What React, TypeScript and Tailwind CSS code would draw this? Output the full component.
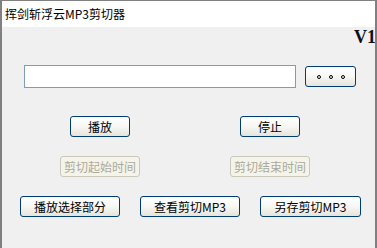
import React from 'react';

const font = { fontFamily: '"Noto Sans CJK SC", "Noto Sans", sans-serif' };

const Btn: React.FC<{ w: string; children: React.ReactNode; disabled?: boolean }> = ({ w, children, disabled }) => {
  if (disabled) {
    return (
      <div
        className={`${w} h-[21px] flex items-center justify-center rounded-[3px] border border-[#cac8bb] bg-[#f5f4ea] text-[12px] leading-none text-[#aca899]`}
      >
        {children}
      </div>
    );
  }
  return (
    <div
      className={`${w} h-[21px] flex items-center justify-center rounded-[3px] border border-[#003c74] bg-gradient-to-b from-white via-[#f7f7f4] to-[#e6e4da] text-[12px] leading-none text-black`}
    >
      {children}
    </div>
  );
};

const App: React.FC = () => {
  return (
    <div
      className="w-[377px] h-[248px] overflow-hidden bg-[#f0f0f0] border-t border-l-2 border-r-2 border-[#808080]"
      style={font}
    >
      {/* titre */}
      <div className="h-[26px] bg-white flex items-center pl-[3px] text-[12px] text-black">
        挥剑斩浮云MP3剪切器
      </div>

      {/* version */}
      <div className="h-[20px] flex justify-end items-center overflow-hidden">
        <span
          className="text-[18px] font-bold leading-none text-[#0a1020] mr-[-1px]"
          style={{ fontFamily: '"Liberation Serif", serif' }}
        >
          V1
        </span>
      </div>

      {/* fichier */}
      <div className="mt-[18px] flex items-center pl-[22px]">
        <div className="w-[272px] h-[23px] bg-white border border-[#7f9db9]" />
        <div className="ml-[9px]">
          <Btn w="w-[51px]">
            <div className="flex gap-[8px]">
              <span className="w-[4px] h-[4px] rounded-full border border-black" />
              <span className="w-[4px] h-[4px] rounded-full border border-black" />
              <span className="w-[4px] h-[4px] rounded-full border border-black" />
            </div>
          </Btn>
        </div>
      </div>

      <div className="mt-[28px] flex pl-[68px] gap-[110px]">
        <Btn w="w-[60px]">播放</Btn>
        <Btn w="w-[60px]">停止</Btn>
      </div>

      <div className="mt-[19px] flex pl-[58px] gap-[90px]">
        <Btn w="w-[80px]" disabled>剪切起始时间</Btn>
        <Btn w="w-[80px]" disabled>剪切结束时间</Btn>
      </div>

      <div className="mt-[19px] flex pl-[18px] gap-[20px]">
        <Btn w="w-[100px]">播放选择部分</Btn>
        <Btn w="w-[100px]">查看剪切MP3</Btn>
        <Btn w="w-[101px]">另存剪切MP3</Btn>
      </div>
    </div>
  );
};

export default App;
